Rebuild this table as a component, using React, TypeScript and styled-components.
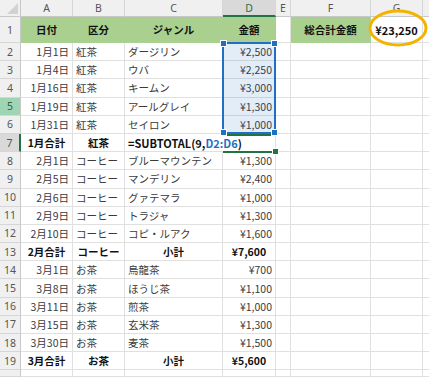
import * as React from 'react';
import styled, { createGlobalStyle, css } from 'styled-components';

const JP = `"Noto Sans CJK JP", "Noto Sans", sans-serif`;
const GREEN_FILL = '#a9d08e';
const GRID = '#e0e0e0';
const XL_GREEN = '#217346';
const SEL_BLUE = '#1f6fc5';

type Kind = 'data' | 'total' | 'formula';

interface Row {
  date: string;
  kubun: string;
  genre: string;
  amount: string;
  kind: Kind;
}

const rows: Row[] = [
  { date: '1月1日', kubun: '紅茶', genre: 'ダージリン', amount: '¥2,500', kind: 'data' },
  { date: '1月4日', kubun: '紅茶', genre: 'ウバ', amount: '¥2,250', kind: 'data' },
  { date: '1月16日', kubun: '紅茶', genre: 'キームン', amount: '¥3,000', kind: 'data' },
  { date: '1月19日', kubun: '紅茶', genre: 'アールグレイ', amount: '¥1,300', kind: 'data' },
  { date: '1月31日', kubun: '紅茶', genre: 'セイロン', amount: '¥1,000', kind: 'data' },
  { date: '1月合計', kubun: '紅茶', genre: '', amount: '', kind: 'formula' },
  { date: '2月1日', kubun: 'コーヒー', genre: 'ブルーマウンテン', amount: '¥1,300', kind: 'data' },
  { date: '2月5日', kubun: 'コーヒー', genre: 'マンデリン', amount: '¥2,400', kind: 'data' },
  { date: '2月6日', kubun: 'コーヒー', genre: 'グァテマラ', amount: '¥1,000', kind: 'data' },
  { date: '2月9日', kubun: 'コーヒー', genre: 'トラジャ', amount: '¥1,300', kind: 'data' },
  { date: '2月10日', kubun: 'コーヒー', genre: 'コピ・ルアク', amount: '¥1,600', kind: 'data' },
  { date: '2月合計', kubun: 'コーヒー', genre: '小計', amount: '¥7,600', kind: 'total' },
  { date: '3月1日', kubun: 'お茶', genre: '烏龍茶', amount: '¥700', kind: 'data' },
  { date: '3月8日', kubun: 'お茶', genre: 'ほうじ茶', amount: '¥1,100', kind: 'data' },
  { date: '3月11日', kubun: 'お茶', genre: '煎茶', amount: '¥1,000', kind: 'data' },
  { date: '3月15日', kubun: 'お茶', genre: '玄米茶', amount: '¥1,300', kind: 'data' },
  { date: '3月30日', kubun: 'お茶', genre: '麦茶', amount: '¥1,500', kind: 'data' },
  { date: '3月合計', kubun: 'お茶', genre: '小計', amount: '¥5,600', kind: 'total' },
];

const columns = ['A', 'B', 'C', 'D', 'E', 'F', 'G', ''];

const App: React.FC = () => {
  return (
    <>
      <GlobalStyle />
      <Sheet>
        {/* column headers */}
        <Corner $r={1} $c={1}>
          <CornerMark />
        </Corner>
        {columns.map((name, i) => (
          <ColHead key={name + i} $r={1} $c={i + 2} $active={name === 'D'}>
            {name}
          </ColHead>
        ))}

        {/* row 1: headings */}
        <RowHead $r={2} $c={1}>1</RowHead>
        {['日付', '区分', 'ジャンル', '金額'].map((t, i) => (
          <Cell key={t} $r={2} $c={i + 2} $align='center' $bold $fill={GREEN_FILL}>
            {t}
          </Cell>
        ))}
        <Cell $r={2} $c={6} />
        <Cell $r={2} $c={7} $align='center' $bold $fill={GREEN_FILL}>
          総合計金額
        </Cell>
        <Cell $r={2} $c={8} $align='center' $bold $big>
          ¥23,250
          <Ring viewBox='0 0 60 38'>
            <ellipse cx='30' cy='19' rx='28' ry='17' fill='none' stroke='#f4b300' strokeWidth='3' />
          </Ring>
        </Cell>
        <Cell $r={2} $c={9} />

        {rows.map((row, i) => {
          const r = i + 3;
          const num = i + 2;
          const total = row.kind !== 'data';
          return (
            <React.Fragment key={num}>
              <RowHead $r={r} $c={1} $state={num === 5 ? 'hover' : num === 7 ? 'edit' : undefined}>
                {num}
              </RowHead>
              <Cell $r={r} $c={2} $align={total ? 'center' : 'right'} $bold={total}>
                {row.date}
              </Cell>
              <Cell $r={r} $c={3} $align={total ? 'center' : 'left'} $bold={total}>
                {row.kubun}
              </Cell>
              {row.kind === 'formula' ? (
                <Cell $r={r} $c={4} $span={2} $align='left' $bold $big>
                  =SUBTOTAL(9,<Ref>D2:D6</Ref>)
                </Cell>
              ) : (
                <>
                  <Cell $r={r} $c={4} $align={total ? 'center' : 'left'} $bold={total}>
                    {row.genre}
                  </Cell>
                  <Cell $r={r} $c={5} $align={total ? 'center' : 'right'} $bold={total}>
                    {row.amount}
                  </Cell>
                </>
              )}
              <Cell $r={r} $c={6} />
              <Cell $r={r} $c={7} />
              <Cell $r={r} $c={8} />
              <Cell $r={r} $c={9} />
            </React.Fragment>
          );
        })}

        {/* row 20, cut off */}
        <RowHead $r={21} $c={1} />
        {[2, 3, 4, 5, 6, 7, 8, 9].map((c) => (
          <Cell key={c} $r={21} $c={c} />
        ))}

        {/* selection D2:D6 */}
        <Selection>
          <Handle $x='left' $y='top' />
          <Handle $x='right' $y='top' />
          <Handle $x='left' $y='bottom' />
          <Handle $x='right' $y='bottom' />
        </Selection>

        {/* edit marker on D7 */}
        <EditMarker>
          <FillHandle />
        </EditMarker>
      </Sheet>
    </>
  );
};

export default App;

const GlobalStyle = createGlobalStyle`
  html, body {
    margin: 0;
    padding: 0;
    background: #ffffff;
  }
  body {
    font-family: ${JP};
  }
`;

const Sheet = styled.div`
  display: grid;
  grid-template-columns: 21px 52px 52px 98px 53px 15px 80px 52px 1fr;
  grid-template-rows: 17px 26px repeat(18, 18.2px) 1fr;
  width: 429px;
  height: 377px;
  overflow: hidden;
  background: #ffffff;
`;

interface Placed {
  $r: number;
  $c: number;
  $span?: number;
}

const place = css<Placed>`
  grid-row: ${(p) => p.$r};
  grid-column: ${(p) => p.$c} / span ${(p) => p.$span ?? 1};
`;

const HeadBase = styled.div<Placed>`
  ${place}
  box-sizing: border-box;
  display: flex;
  align-items: center;
  justify-content: center;
  background: #f0f0f0;
  font-family: 'Noto Sans', 'Liberation Sans', sans-serif;
  font-size: 10.5px;
  color: #555555;
`;

const Corner = styled(HeadBase)`
  align-items: flex-end;
  justify-content: flex-end;
  padding: 0 2px 2px 0;
  border-right: 1px solid #c8c8c8;
  border-bottom: 1px solid #c8c8c8;
`;

const CornerMark = styled.div`
  width: 0;
  height: 0;
  border-left: 11px solid transparent;
  border-bottom: 11px solid #d2d2d2;
`;

const ColHead = styled(HeadBase)<{ $active?: boolean }>`
  border-right: 1px solid #d6d6d6;
  border-bottom: 1px solid #c8c8c8;
  ${(p) =>
    p.$active &&
    css`
      background: #d9d9d9;
      color: ${XL_GREEN};
      border-bottom: 2px solid ${XL_GREEN};
    `}
`;

const RowHead = styled(HeadBase)<{ $state?: 'hover' | 'edit' }>`
  border-right: 1px solid #c8c8c8;
  border-bottom: 1px solid #d6d6d6;
  ${(p) =>
    p.$state === 'hover' &&
    css`
      background: #9fd5b4;
      color: #3a5a46;
    `}
  ${(p) =>
    p.$state === 'edit' &&
    css`
      background: #d9d9d9;
      border-right: 2px solid ${XL_GREEN};
    `}
`;

interface CellProps extends Placed {
  $align?: 'left' | 'right' | 'center';
  $bold?: boolean;
  $fill?: string;
  $big?: boolean;
}

const Cell = styled.div<CellProps>`
  ${place}
  position: relative;
  box-sizing: border-box;
  display: flex;
  align-items: center;
  justify-content: ${(p) =>
    p.$align === 'right' ? 'flex-end' : p.$align === 'center' ? 'center' : 'flex-start'};
  padding: 0 3px;
  white-space: nowrap;
  font-family: ${JP};
  font-size: ${(p) => (p.$big ? '11px' : '10.5px')};
  font-weight: ${(p) => (p.$bold ? 700 : 400)};
  color: ${(p) => (p.$bold ? '#111111' : '#3a3a3a')};
  background: ${(p) => p.$fill ?? '#ffffff'};
  border-right: 1px solid ${(p) => p.$fill ?? GRID};
  border-bottom: 1px solid ${(p) => p.$fill ?? GRID};
`;

const Ref = styled.span`
  color: ${SEL_BLUE};
`;

const Ring = styled.svg`
  position: absolute;
  left: -3px;
  top: -8px;
  width: 60px;
  height: 38px;
  overflow: visible;
  z-index: 5;
  pointer-events: none;
`;

const Selection = styled.div`
  grid-row: 3 / 8;
  grid-column: 5;
  position: relative;
  z-index: 3;
  margin: -1px 0 0 -1px;
  border: 2px solid ${SEL_BLUE};
  background: rgba(40, 115, 200, 0.13);
`;

const Handle = styled.div<{ $x: 'left' | 'right'; $y: 'top' | 'bottom' }>`
  position: absolute;
  ${(p) => p.$x}: -4px;
  ${(p) => p.$y}: -4px;
  width: 5px;
  height: 5px;
  background: ${SEL_BLUE};
  border: 1px solid #ffffff;
`;

const EditMarker = styled.div`
  grid-row: 8;
  grid-column: 5;
  position: relative;
  z-index: 2;
  margin: 0 0 -1px 0;
  border-top: 2px solid ${XL_GREEN};
  border-bottom: 2px solid ${XL_GREEN};
`;

const FillHandle = styled.div`
  position: absolute;
  right: -3px;
  bottom: -4px;
  width: 5px;
  height: 5px;
  background: ${XL_GREEN};
  border: 1px solid #ffffff;
`;
